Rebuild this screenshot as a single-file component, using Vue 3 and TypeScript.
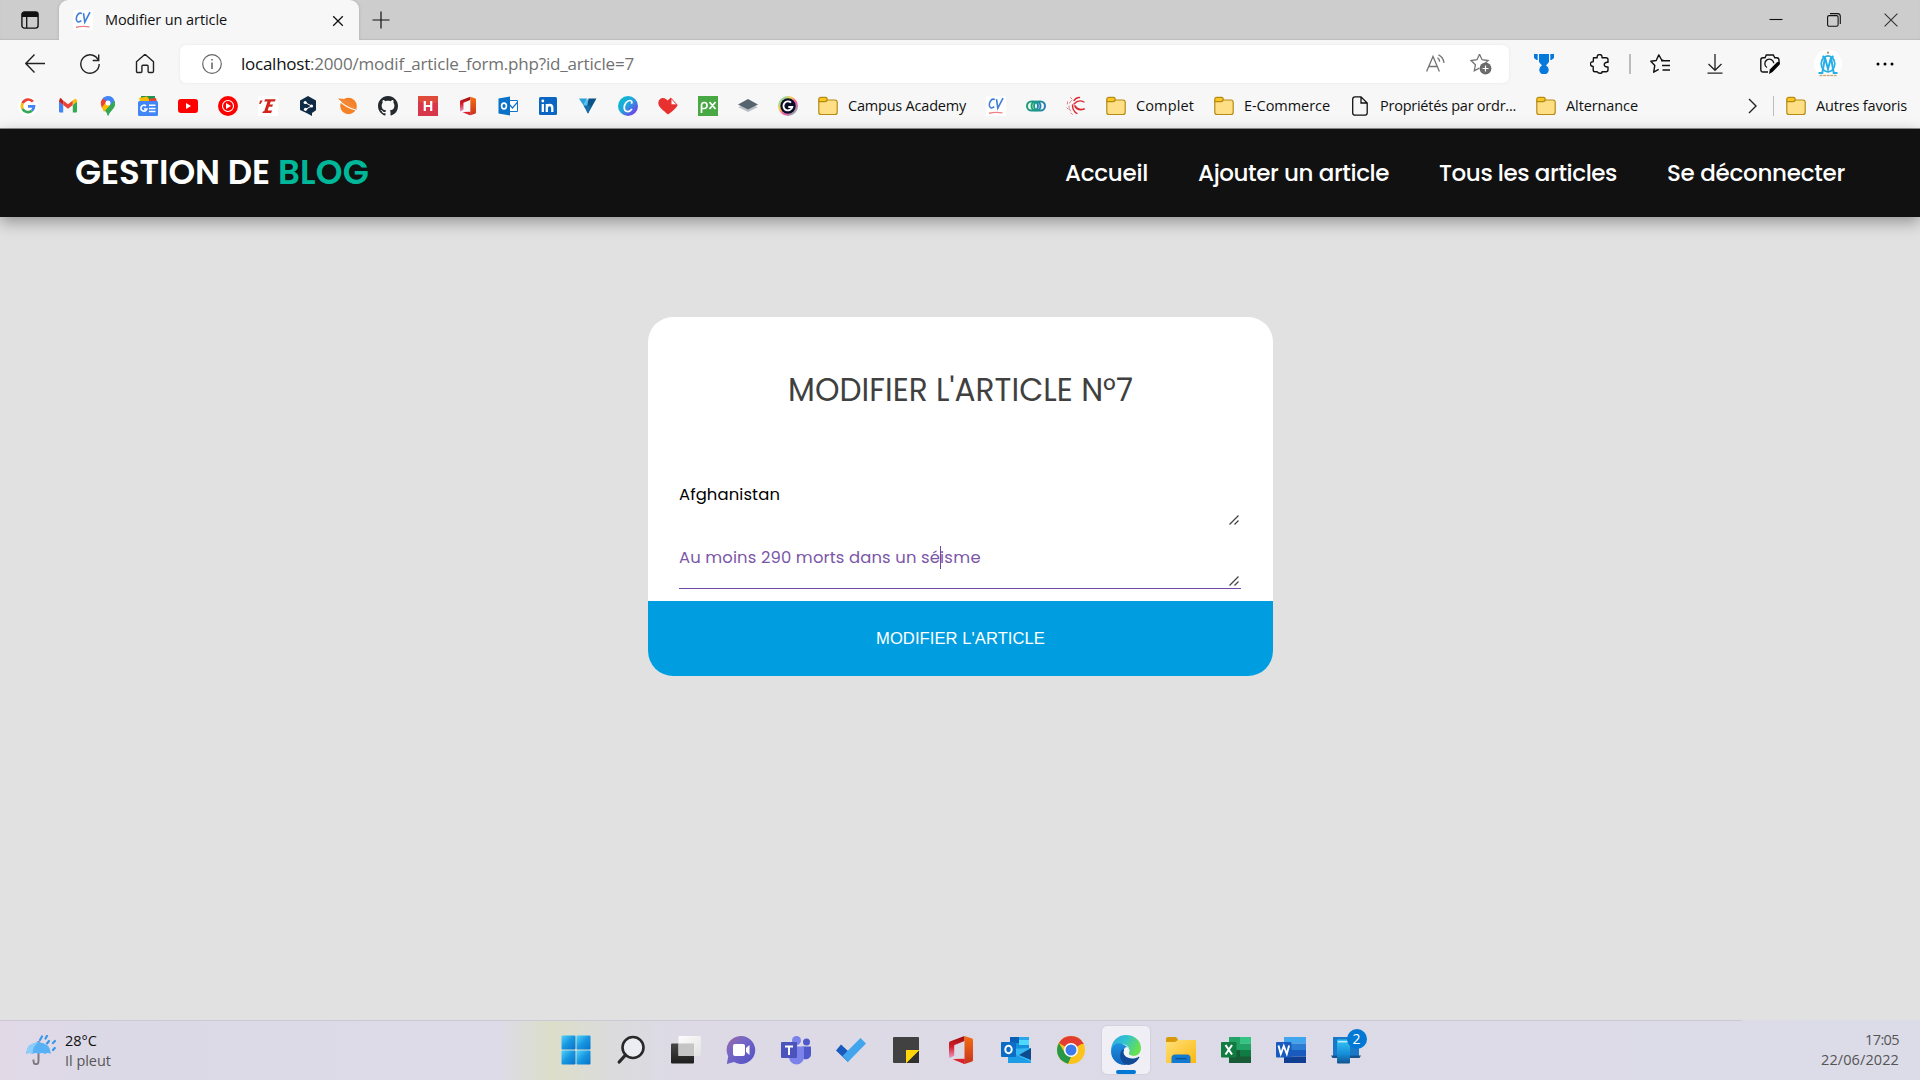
<script setup lang="ts">
import type { Directive } from 'vue'

// Tracks a label so that it fills the given width in pixels.
const vFit: Directive<HTMLElement, number> = {
  mounted(el, { value }) {
    const natural = el.getBoundingClientRect().width
    const count = (el.textContent ?? '').length
    if (count > 0) el.style.letterSpacing = `${(value - natural) / count}px`
  },
}

interface Link {
  label: string
  width: number
}

const nav: Link[] = [
  { label: 'Accueil', width: 83 },
  { label: 'Ajouter un article', width: 191 },
  { label: 'Tous les articles', width: 178 },
  { label: 'Se déconnecter', width: 178 },
]
</script>

<template>
  <div class="screen">
    <svg width="0" height="0" class="defs">
      <defs>
        <symbol id="folder" viewBox="0 0 20 20">
          <path d="M.8 4.5v11.7c0 1.6.8 2.3 2.3 2.3h13.8c1.500 0 2.300-.8 2.300-2.300V6.300C19.200 4.800 18.400 4 17 4H9" fill="#ffdf85" stroke="#b58b14" stroke-width="1.200" />
          <path d="M.8 5.600V3.400C.8 2 1.500 1.300 2.800 1.300h4.700c1 0 1.700.7 1.700 1.700S8.500 5.600 7 5.600z" fill="#f9c623" stroke="#b58b14" stroke-width="1.200" />
        </symbol>
        <symbol id="cv" viewBox="0 0 20 20">
          <rect width="20" height="20" fill="#fff" />
          <path d="M8.800 3.600C6 2 3.200 5.500 3.300 9c.1 3.500 2.700 3.600 5 1.700M10.500 3.200l1.300 9 5.200-10" fill="none" stroke="#3f7fd8" stroke-width="1.600" />
          <path d="M3 17.300c4-1 9-1.200 13.500-.4" fill="none" stroke="#ef7f84" stroke-width="1.400" />
        </symbol>
        <symbol id="office" viewBox="0 0 24 28">
          <path d="M15.500 0 1.500 5.200C.5 5.600 0 6.300 0 7.400v13.200c0 1 .6 1.600 1.500 1.200l3.700-2.100V9.200L15.500 5z" fill="url(#officeA)" />
          <path d="M15.500 0 22.500 2.200c1 .3 1.500 1 1.500 2v19.500c0 1-.5 1.700-1.500 2L15.500 28z" fill="url(#officeB)" />
          <path d="M3.600 23.300 15.500 28v-5z" fill="#d9232e" />
          <path d="M5.200 23 15.500 22.800V28z" fill="#d9232e" />
        </symbol>
        <linearGradient id="officeA" x1="0" y1="0" x2="0" y2="1"><stop offset="0" stop-color="#9c0b0e" /><stop offset=".5" stop-color="#d4202b" /><stop offset="1" stop-color="#e89ac9" /></linearGradient>
        <linearGradient id="officeB" x1="0" y1="0" x2="0" y2="1"><stop offset="0" stop-color="#f36f14" /><stop offset="1" stop-color="#c8321b" /></linearGradient>
        <linearGradient id="canva" x1="0" y1="0" x2="1" y2="1"><stop offset="0" stop-color="#00c4cc" /><stop offset=".45" stop-color="#20a5dc" /><stop offset="1" stop-color="#8a1ff0" /></linearGradient>
        <linearGradient id="rings" x1="0" y1="0" x2="1" y2="0"><stop offset="0" stop-color="#17a472" /><stop offset="1" stop-color="#247fb5" /></linearGradient>
        <linearGradient id="rainbow" x1="0" y1="0" x2="1" y2="1"><stop offset="0" stop-color="#31d6f2" /><stop offset=".35" stop-color="#f7d34c" /><stop offset=".6" stop-color="#f353ad" /><stop offset="1" stop-color="#5bdc9c" /></linearGradient>
        <linearGradient id="win" x1="0" y1="0" x2="1" y2="1"><stop offset="0" stop-color="#4fd2fb" /><stop offset=".5" stop-color="#1796e0" /><stop offset="1" stop-color="#0672ca" /></linearGradient>
        <linearGradient id="dark" x1="0" y1="0" x2="0" y2="1"><stop offset="0" stop-color="#474747" /><stop offset="1" stop-color="#1e1e1e" /></linearGradient>
        <linearGradient id="pane" x1="0" y1="0" x2="1" y2="1"><stop offset="0" stop-color="#fdfdfd" /><stop offset="1" stop-color="#e2e2e2" /></linearGradient>
        <linearGradient id="chat" x1="0" y1="0" x2="1" y2="1"><stop offset="0" stop-color="#a2669c" /><stop offset=".35" stop-color="#7768c5" /><stop offset="1" stop-color="#5051c7" /></linearGradient>
        <linearGradient id="edgeTop" x1="0" y1="0" x2="1" y2=".4"><stop offset="0" stop-color="#2ba6e6" /><stop offset=".5" stop-color="#31c3cf" /><stop offset="1" stop-color="#68e14f" /></linearGradient>
        <linearGradient id="edgeBlue" x1="0" y1="0" x2="0" y2="1"><stop offset="0" stop-color="#1d92e1" /><stop offset="1" stop-color="#0f64bd" /></linearGradient>
        <linearGradient id="yellow" x1="0" y1="0" x2="1" y2="1"><stop offset="0" stop-color="#ffe07a" /><stop offset="1" stop-color="#fcb80e" /></linearGradient>
        <linearGradient id="phone" x1="0" y1="0" x2="0" y2="1"><stop offset="0" stop-color="#36c6f4" /><stop offset=".6" stop-color="#168dd8" /><stop offset="1" stop-color="#12548f" /></linearGradient>
      </defs>
    </svg>

    <div class="tabbar">
      <svg class="tab-menu" width="18" height="18" viewBox="0 0 18 18"><rect x=".9" y=".9" width="16.200" height="16.200" rx="2.600" fill="none" stroke="#111" stroke-width="1.400" /><path d="M1 6V3.500Q1 1 3.500 1h11Q17 1 17 3.500V6z" fill="#111" /><path d="M5.700 6v11" stroke="#111" stroke-width="1.300" /></svg>
      <div class="tab">
        <svg class="favicon" width="20" height="20"><use href="#cv" /></svg>
        <span v-fit="122" class="tab-title">Modifier un article</span>
        <svg class="tab-close" width="12" height="12" viewBox="0 0 12 12"><path d="m1.200 1.200 9.600 9.600M10.800 1.200l-9.600 9.600" stroke="#111" stroke-width="1.300" /></svg>
      </div>
      <svg class="plus" width="18" height="18" viewBox="0 0 18 18"><path d="M9 .5v17M.5 9h17" stroke="#111" stroke-width="1.200" /></svg>
      <div class="controls">
        <svg width="14" height="14" viewBox="0 0 14 14"><path d="M.5 6.500h13" stroke="#111" stroke-width="1.100" /></svg>
        <svg width="14" height="14" viewBox="0 0 14 14"><rect x=".6" y="2.600" width="10.500" height="10.600" rx="1.500" fill="none" stroke="#111" stroke-width="1.100" /><path d="M3 .6h7.500q2.800 0 2.800 2.800V11" fill="none" stroke="#111" stroke-width="1.100" /></svg>
        <svg width="14" height="14" viewBox="0 0 14 14"><path d="m.6.6 12.800 12.800M13.400.6.6 13.400" stroke="#333" stroke-width="1.100" /></svg>
      </div>
    </div>

    <div class="toolbar">
      <div class="history">
        <svg width="20" height="20" viewBox="0 0 20 20"><path d="M20 9.500H1M9.500.5.8 9.500l8.700 9" fill="none" stroke="#222" stroke-width="1.400" /></svg>
        <svg width="20" height="20" viewBox="0 0 20 20"><path d="M18.500 6.500A9.200 9.200 0 1 0 19.200 10" fill="none" stroke="#222" stroke-width="1.400" /><path d="M18.700.5v6h-6" fill="none" stroke="#222" stroke-width="1.400" /></svg>
        <svg width="20" height="20" viewBox="0 0 20 20"><path d="M1.500 7.700 10 .3l8.500 7.400v9.600q0 1.200-1.200 1.200h-3.200q-1 0-1-1v-5.200q0-1-1-1H7.900q-1 0-1 1v5.200q0 1-1 1H2.700q-1.200 0-1.200-1.200z" fill="none" stroke="#222" stroke-width="1.400" stroke-linejoin="round" /></svg>
      </div>
      <div class="address">
        <svg class="info" width="20" height="20" viewBox="0 0 20 20"><circle cx="10" cy="10" r="9.300" fill="none" stroke="#666" stroke-width="1.200" /><path d="M10 8.500V15M10 5v1.600" stroke="#555" stroke-width="1.400" /></svg>
        <div class="url"><span v-fit="69" class="host">localhost</span><span v-fit="324">:2000/modif_article_form.php?id_article=7</span></div>
        <svg class="read" width="20" height="20" viewBox="0 0 20 20"><path d="M.6 17.500 7 2.500l6.400 15M2.700 12.500h8.600M11.500 3.800q2 1.200 2.200 4M12.500.8q4.800 2.200 5.500 8" fill="none" stroke="#737373" stroke-width="1.300" /></svg>
        <svg class="addfav" width="22" height="22" viewBox="0 0 22 22"><path d="m9.500 1.200 2.600 5.500 6 .8-4.400 4.300.8 3M9.500 1.200 7 6.700l-6 .8 4.400 4.300-1.100 6 5-2.700" fill="none" stroke="#737373" stroke-width="1.300" /><circle cx="15.500" cy="15.500" r="5.900" fill="#6b6b6b" /><path d="M15.500 12.500v6M12.500 15.500h6" stroke="#fff" stroke-width="1.200" /></svg>
      </div>
      <svg class="medal" width="20" height="20" viewBox="0 0 20 20"><path d="M0 0h3.700v6H2.500L0 4zM20 0h-3.700v6h1.200L20 4zM5 0h10v8l-3 3.500a4.700 4.700 0 1 1-4 0L5 8z" fill="#0578dc" /></svg>
      <svg class="puzzle" width="20" height="20" viewBox="0 0 20 20"><path d="M3.500 3.700h3.700c-.8-4.200 5.500-4.200 4.800 0h4q2 0 2 2v2.700c-5-.8-5 5.300 0 4.500v2.800q0 2-2 2h-4c.7 2-4 2-4.800 0H5q-1.800 0-1.800-1.800v-3.400C-.5 12.200-.5 7.500 3.200 7.700z" fill="none" stroke="#111" stroke-width="1.400" stroke-linejoin="round" /></svg>
      <i class="sep tall"></i>
      <svg class="favs" width="20" height="20" viewBox="0 0 20 20"><path d="M13.500 6.400 11.700 6 8.800.9 6.200 6.500.8 7.300l4 4.100-1.100 6.800 5-2.800M11 6.700h9M12 11.500h8M12.500 16h7.500" fill="none" stroke="#111" stroke-width="1.400" stroke-linejoin="round" /></svg>
      <svg class="download" width="16" height="20" viewBox="0 0 16 20"><path d="M8 0v16M1.500 10 8 16.300l6.500-6.300M.5 19.200h15" fill="none" stroke="#222" stroke-width="1.300" /></svg>
      <svg class="camera" width="20" height="20" viewBox="0 0 20 20"><path d="M8 18H3.200q-2.400 0-2.400-2.400V6q0-2.200 2.200-2.200h2L6.300 1h7l1.500 2.800h2Q19 3.800 19 6v3" fill="none" stroke="#111" stroke-width="1.400" /><path d="M7 13.500A4.500 4.500 0 1 1 13.800 9.200" fill="none" stroke="#111" stroke-width="1.300" /><path d="m9 20 .8-4.500L17 8.200q1.400-1 2.500.2 1 1.200 0 2.400L12.500 18z" fill="#000" /></svg>
      <svg class="avatar" width="28" height="28" viewBox="0 0 28 28"><circle cx="14" cy="14" r="14" fill="#fff" /><circle cx="14" cy="2.700" r="1.100" fill="#b58b52" /><ellipse cx="14" cy="13.800" rx="6.800" ry="8" fill="none" stroke="#27aee4" stroke-width="1.700" /><path d="M4.500 23h3.800L11 7.500l3 11.500 3-11.500L19.700 23h3.800M11 7.500 8.500 6M17 7.500 19.500 6" fill="none" stroke="#27aee4" stroke-width="2" /><path d="M5.500 25.500h17" stroke="#c9ac7d" stroke-width="1.500" stroke-dasharray="3 .6" /></svg>
      <svg class="dots" width="18" height="4" viewBox="0 0 18 4"><circle cx="2" cy="2" r="1.500" /><circle cx="9" cy="2" r="1.500" /><circle cx="16" cy="2" r="1.500" /></svg>
    </div>

    <div class="bookmarks">
      <svg viewBox="0 0 20 20"><circle cx="10" cy="10" r="10" fill="#fff" /><g fill="none" stroke-width="2.700"><path d="M14.900 5.700A6.100 6.100 0 0 0 4.600 7.200" stroke="#ea4335" /><path d="M4.600 7.200a6.100 6.100 0 0 0 0 5.600" stroke="#fbbc05" /><path d="M4.600 12.800a6.100 6.100 0 0 0 9.300 1.900" stroke="#34a853" /><path d="M13.900 14.700q2.100-1.700 2.100-4.400h-6" stroke="#4285f4" /></g></svg>
      <svg viewBox="0 0 20 20"><path d="M1 5v10.500q0 1 1 1h3.200V9z" fill="#4285f4" /><path d="M19 5v10.500q0 1-1 1h-3.200V9z" fill="#34a853" /><path d="m1 5.500 4.200 3.500V4.600L4 3.500Q2-.1 1 5.500" fill="#c5221f" /><path d="M5.200 4.600V9l4.800 3.700L14.800 9V4.600L10 8.300z" fill="#ea4335" /><path d="M14.800 4.600V9L19 5.700q0-4.200-3-2.200z" fill="#fbbc04" /></svg>
      <svg viewBox="0 0 20 20"><path d="M4.200 11.500 10 4l6.500 1q2 5-3 9.500Q11 17 10 20q-.8-3.500-3-5.300z" fill="#34a853" /><path d="M3 6Q5-.1 10 0q5 .1 6.500 5L10 11z" fill="#4285f4" /><path d="M5 2.500 9 6l-5 6Q2 7 3.200 5z" fill="#ea4335" /><path d="m3.800 11.500 4-5 4.500 2.500-6.300 7z" fill="#fbbc04" /><path d="M16.500 5q1.500 5-3 9.500Q11 17 10 20q-.8-3.500-2.500-5.500z" fill="#34a853" /><circle cx="10" cy="7" r="2.500" fill="#fff" /></svg>
      <svg viewBox="0 0 20 20"><path d="M3 0h14v5H3z" fill="#25934a" /><path d="m1 2 8-1.500 4 5H2z" fill="#fbbc05" /><path d="m11 3 7-1 1 4h-8z" fill="#ea4335" /><rect y="5" width="20" height="15" rx="1.500" fill="#4285f4" /><path d="M8 10a3 3 0 1 0 .8 3H6M11 9.300h6.500M11 12.500h6.500M11 15.500h6.500" fill="none" stroke="#fff" stroke-width="1.600" /></svg>
      <svg viewBox="0 0 20 20"><rect y="3" width="20" height="14" rx="3" fill="#f00" /><path d="m8 7 5 3-5 3z" fill="#fff" /></svg>
      <svg viewBox="0 0 20 20"><circle cx="10" cy="10" r="10" fill="#f00" /><circle cx="10" cy="10" r="5.500" fill="none" stroke="#fff" stroke-width="1.100" /><path d="m8 7 5 3-5 3z" fill="#fff" /></svg>
      <svg viewBox="0 0 20 20"><rect width="20" height="20" fill="#fff" /><path d="M7.200 3.200h10.600l-1 2.300h-4l-1.100 3.100h3.300l-.8 2.200h-3.300l-1.200 3.700h4.500l-1.200 2.500H4.200l1-1.700h1L9.500 5.500H6.200zM2 4.500h2.700L2.500 8H1.200z" fill="#d2231b" /></svg>
      <svg viewBox="0 0 20 20"><path d="m10 0 8 4.600v9.700L14 17v3l-4.500-2.500L2 14V4.600z" fill="#0f2b46" /><path d="m7 6.500 6.500 3.500L8 13.200" fill="none" stroke="#fff" stroke-width="1" /><circle cx="7.200" cy="6.500" r="1.600" fill="#fff" /><circle cx="13.500" cy="10" r="1.600" fill="#fff" /><circle cx="7.500" cy="13.300" r="1.600" fill="#fff" /></svg>
      <svg viewBox="0 0 20 20"><circle cx="10.500" cy="10" r="8.300" fill="#f58025" /><path d="M0 2.700q5-1 12 3.300 5 3 7 8Q8 11.500 0 2.700" fill="#f58634" /><path d="M.5 3.800q7 7.600 18 10.500" fill="none" stroke="#fff" stroke-width="1.100" /></svg>
      <svg viewBox="0 0 16 16"><path fill="#24292f" d="M8 0C3.580 0 0 3.580 0 8c0 3.540 2.290 6.530 5.470 7.590.4.070.55-.17.55-.38 0-.19-.01-.82-.01-1.490-2.010.37-2.530-.49-2.690-.94-.09-.23-.48-.94-.82-1.130-.28-.15-.68-.52-.01-.53.63-.01 1.080.58 1.230.82.72 1.210 1.870.87 2.330.66.070-.52.28-.87.51-1.070-1.780-.2-3.640-.89-3.640-3.950 0-.87.31-1.590.82-2.150-.08-.2-.36-1.020.08-2.120 0 0 .67-.21 2.200.82.64-.18 1.320-.27 2-.27s1.360.09 2 .27c1.530-1.040 2.200-.82 2.200-.82.44 1.100.16 1.920.08 2.120.51.56.82 1.270.82 2.150 0 3.070-1.870 3.750-3.650 3.950.29.25.54.73.54 1.480 0 1.070-.01 1.930-.01 2.200 0 .21.15.46.55.38A8.010 8.010 0 0 0 16 8c0-4.420-3.580-8-8-8" /></svg>
      <svg viewBox="0 0 20 20"><rect width="20" height="20" fill="#d8364a" /><path d="M0 0h20v6L10 9 0 5z" fill="#e04c3c" /><path d="M6.800 5v10M13.200 5v10M6.800 10h6.400" stroke="#fff" stroke-width="2.200" /></svg>
      <svg viewBox="0 0 20 20"><use href="#office" x="2" width="16" height="20" /></svg>
      <svg viewBox="0 0 20 20"><path d="M10 4.500h9.500v11H10z" fill="#fff" stroke="#1474c8" stroke-width="1" /><path d="m11 8 3.500 4L20 5.500" fill="none" stroke="#1474c8" stroke-width="1.200" /><path d="M.5 2.500 12 .5v19L.5 17.500z" fill="#0b72c9" /><ellipse cx="6" cy="10" rx="2.400" ry="2.900" fill="none" stroke="#fff" stroke-width="1.600" /></svg>
      <svg viewBox="0 0 20 20"><rect x="1" y="1" width="18" height="18" rx="1.500" fill="#0a66c2" /><path d="M4.800 8v8M8.800 8v8M8.800 12q0-3 2.800-3 2.700 0 2.700 3v4" fill="none" stroke="#fff" stroke-width="2.300" /><circle cx="4.800" cy="5" r="1.400" fill="#fff" /></svg>
      <svg viewBox="0 0 20 20"><path d="M1 2.500h8L5.500 9.500z" fill="#2c9fdc" /><path d="M9 2.500 13 9.500 10 17.500 5.500 9.500z" fill="#53bdeb" /><path d="M10.500 2.500H18.500L10 17.500 8.500 15z" fill="#095387" /><path d="M5.500 9.500h7.500l-3 8z" fill="#176fa9" /></svg>
      <svg viewBox="0 0 20 20"><circle cx="10" cy="10" r="10" fill="url(#canva)" /><path d="M13.500 7.700q1.200-3-1.500-3.200c-3.200-.2-5.800 4-5.800 7 0 4.500 4.700 5.500 7.800 1.500" fill="none" stroke="#fff" stroke-width="1.700" /></svg>
      <svg viewBox="0 0 20 20"><path d="M10 18.500C5 14 0 11 .3 6.500.8 1 7 .5 9.500 4.500L13 1.500V9h6.700Q18 13 10 18.500" fill="#e8302f" /><path d="m13 2.300 6 6.500h-6z" fill="#fff" stroke="#e8302f" stroke-width="1" /></svg>
      <svg viewBox="0 0 20 20"><rect width="20" height="20" fill="#47a844" /><path d="M3.500 17V9.500q0-3 2.800-3t2.700 3-2.700 3H4M11.500 6l6 7M17.500 6l-6 7" fill="none" stroke="#fff" stroke-width="1.700" /></svg>
      <svg viewBox="0 0 20 20"><path d="m0 11 10 5 10-5-10-3z" fill="#b9c1c7" /><path d="m0 8.500 10 5 10-5L10 3z" fill="#56646f" /></svg>
      <svg viewBox="0 0 20 20"><circle cx="10" cy="10" r="10" fill="url(#rainbow)" /><circle cx="10" cy="10" r="7.700" fill="#0a0c28" /><path d="M13 6.600a4.500 4.500 0 1 0 1.300 4.400h-4" fill="none" stroke="#fff" stroke-width="1.900" /></svg>
      <div class="mark"><svg><use href="#folder" /></svg><span v-fit="118">Campus Academy</span></div>
      <svg><use href="#cv" /></svg>
      <svg viewBox="0 0 20 20"><g fill="none" stroke="url(#rings)" stroke-width="2"><rect x="1" y="5.500" width="11" height="9" rx="4.500" /><circle cx="10" cy="10" r="4.500" /><rect x="8" y="5.500" width="11" height="9" rx="4.500" /></g></svg>
      <svg viewBox="0 0 20 20"><g fill="none" stroke="#dc2830" stroke-linecap="round"><path d="M8 4.500q2.500-3.500 5.500-3M8 8q4.500-5 10-2" stroke-width="1.400" /><path d="M6.500 9q0 6 4.500 8.500" stroke-width="1.400" /><path d="M9 10q2.500 5 9 3" stroke-width="1.800" /><path d="M5.500 4.500Q4 5.500 3.500 7M3 10q-.5 3 1.500 5M4.500 1.500 6 3M1.500 6v2M1 12l1 1M5 17l1.500 1.500" stroke-width=".6" /></g></svg>
      <div class="mark"><svg><use href="#folder" /></svg><span v-fit="58">Complet</span></div>
      <div class="mark"><svg><use href="#folder" /></svg><span v-fit="86">E-Commerce</span></div>
      <div class="mark"><svg viewBox="0 0 20 20"><path d="M5 .8h6L17.200 7v9.700q0 2.500-2.500 2.500H5.200q-2.500 0-2.500-2.500V3.200Q2.700.8 5 .8M11 1v6h6" fill="none" stroke="#111" stroke-width="1.300" /></svg><span v-fit="136">Propriétés par ordr...</span></div>
      <div class="mark"><svg><use href="#folder" /></svg><span v-fit="72">Alternance</span></div>
      <div class="others">
        <svg class="chev" viewBox="0 0 9 16"><path d="m1 1 7 7-7 7" fill="none" stroke="#222" stroke-width="1.400" /></svg>
        <i class="sep"></i>
        <div class="mark"><svg><use href="#folder" /></svg><span v-fit="91">Autres favoris</span></div>
      </div>
    </div>

    <header class="site-head">
      <div class="logo"><span v-fit="203">GESTION DE&nbsp;</span><span v-fit="91" class="accent">BLOG</span></div>
      <nav>
        <a v-for="item in nav" :key="item.label" v-fit="item.width">{{ item.label }}</a>
      </nav>
    </header>

    <main>
      <section class="card">
        <h1><span v-fit="345">MODIFIER L'ARTICLE N°7</span></h1>
        <div class="field first">
          <span v-fit="101">Afghanistan</span>
          <svg class="grip" viewBox="0 0 10 10"><path d="M.5 9.500 9.500.5M5.500 9.500l4-4" stroke="#444" stroke-width="1.300" /></svg>
        </div>
        <div class="field active">
          <span v-fit="261">Au moins 290 morts dans un sé</span><i class="caret"></i><span v-fit="41">isme</span>
          <svg class="grip" viewBox="0 0 10 10"><path d="M.5 9.500 9.500.5M5.500 9.500l4-4" stroke="#444" stroke-width="1.300" /></svg>
        </div>
        <button><span v-fit="169">MODIFIER L'ARTICLE</span></button>
      </section>
    </main>

    <footer class="taskbar">
      <div class="weather">
        <svg width="30" height="30" viewBox="0 0 30 30"><path d="M12.500 6v20q0 3.200-2.500 3.200T7.500 26v-1.500" fill="none" stroke="#7d7b80" stroke-width="2" /><path d="M0 19Q1 8 12.500 7 24 8 25 19q-3-2-6 0-3-2-6.500 0-3-2-6 0-3.500-2-6.500 0" fill="#58b1f5" /><path d="M0 19Q1 8 12.500 7q-6 4-6 12-3.500-2-6.500 0" fill="#8ccdfb" /><path d="m14 5 2-3.500M19.500 3.500 21 .8M21 8.500l2-2.500M27 8l2-2M27 15l1.800-2" stroke="#3a98ea" stroke-width="2.200" stroke-linecap="round" /></svg>
        <div><p class="temp"><span v-fit="32">28°C</span></p><p class="sky"><span v-fit="46">Il pleut</span></p></div>
      </div>
      <div class="apps">
        <div class="app"><svg viewBox="0 0 30 30"><g fill="url(#win)"><rect x=".5" y=".5" width="14" height="14" rx="1" /><rect x="15.500" y=".5" width="14" height="14" rx="1" /><rect x=".5" y="15.500" width="14" height="14" rx="1" /><rect x="15.500" y="15.500" width="14" height="14" rx="1" /></g></svg></div>
        <div class="app"><svg viewBox="0 0 30 30"><circle cx="17" cy="12.500" r="10.500" fill="#ececf3" stroke="#292929" stroke-width="2.600" /><path d="m9.500 20-6.300 7" stroke="#292929" stroke-width="3.300" stroke-linecap="round" /></svg></div>
        <div class="app"><svg viewBox="0 0 30 30"><rect y="8.500" width="23" height="20" rx="1" fill="url(#dark)" /><rect x="7.500" y="1" width="22.500" height="20" rx="1" fill="url(#pane)" /><path d="M7.500 8.500H23V21H7.500z" fill="#c5c5c5" /></svg></div>
        <div class="app"><svg viewBox="0 0 30 30"><path d="M15 1a14 14 0 1 1-7 26L.8 29l1.400-7.500A14 14 0 0 1 15 1" fill="url(#chat)" /><rect x="7" y="9" width="12" height="12" rx="2" fill="#fff" /><path d="m20 13 3.500-3v10L20 17z" fill="#fff" /></svg></div>
        <div class="app"><svg viewBox="0 0 30 30"><circle cx="15.500" cy="5.500" r="4.500" fill="#7b83eb" /><circle cx="25.500" cy="7" r="3.500" fill="#5059c9" /><path d="M21 11.500h9v8.500a5.500 5.500 0 0 1-9 3z" fill="#5059c9" /><path d="M8 11.500h15V22a7.500 7.500 0 0 1-15 0z" fill="#7b83eb" /><rect y="7" width="16" height="16" rx="1" fill="#4b53bc" /><path d="M4 11.500h8M8 11.500V20" stroke="#fff" stroke-width="1.900" /></svg></div>
        <div class="app"><svg viewBox="0 0 30 30"><path d="m0 15.500 5-6 7 6.500v11z" fill="#185abd" /><path d="M6.500 21 24.500 3l5.500 5.500L12 27z" fill="#41a5ee" /></svg></div>
        <div class="app"><svg viewBox="0 0 30 30"><rect x="2" y="2" width="26" height="26" rx="1" fill="#414141" /><path d="M15 15h13v1L16 28h-1z" fill="#ffd60a" /><path d="M28 15.500V28H15.500z" fill="#303030" /></svg></div>
        <div class="app"><svg viewBox="0 0 30 30"><use href="#office" x="3" y="1" width="24" height="28" /></svg></div>
        <div class="app"><svg viewBox="0 0 30 30"><path d="M9 2h19v12H9z" fill="#1490df" /><path d="M9 2h9v6H9z" fill="#0a5fb4" /><path d="M18 2h10v8H18z" fill="#50d9ff" /><path d="M18 2h10v3H18z" fill="#28a8ea" /><path d="M7 14 30 13v15H7z" fill="#35b8f1" /><path d="m18 20 12-7v12z" fill="#0c4b8c" /><path d="m7 16 23 11v1H7z" fill="#1d9de5" /><rect y="7" width="15" height="15" rx="1" fill="#0c6dc6" /><ellipse cx="7.500" cy="14.500" rx="3.200" ry="3.800" fill="none" stroke="#fff" stroke-width="2" /></svg></div>
        <div class="app"><svg viewBox="0 0 30 30"><circle cx="15" cy="15" r="14" fill="#fcc31e" /><path d="M15 15 2.900 8A14 14 0 0 1 27.200 8z" fill="#e23d30" /><path d="M2.900 8 9.500 19l5.500 3-3 6.700A14 14 0 0 1 2.900 8" fill="#279847" /><path d="M15 8.500h12.400" stroke="#e23d30" stroke-width="1" /><circle cx="15" cy="15" r="7" fill="#fff" /><circle cx="15" cy="15" r="5.500" fill="#3b7bed" /></svg></div>
        <div class="app current"><svg viewBox="0 0 30 30"><path d="M0 16C0 6 7 0 15 0c9 0 15 6 15 13 0 5-3.500 8-8 8-3 0-5-1-4-3 2-5-2-9-8-9-5 0-9 3-10 7" fill="url(#edgeTop)" /><path d="M0 16C1 9 7 7 11 9c5 2 7 4 7 7-9-3-10 8-2 13.800C7 30.800 0 25 0 16" fill="url(#edgeBlue)" /><path d="M11 15c-4 6-1 14 6 14.900 5 0 9-3 11.300-7.400.4-.8-.5-.9-1-.6C20 26 10 22 13 14z" fill="#114a96" /><path d="M13 14q3-4 5 .5.500 2-.5 4 1 2.500 5 2.300Q15 24 13 18z" fill="#f5f5f8" /></svg></div>
        <div class="app"><svg viewBox="0 0 30 30"><path d="M0 4Q0 2 2 2h8l3 4v3H0z" fill="#d99a09" /><path d="M0 7h9l3-2h18v23H0z" fill="url(#yellow)" /><path d="M5.500 28v-5q0-3.500 3.500-3.500h12q3.500 0 3.500 3.500v5z" fill="#127bd0" /><path d="M9.500 23.700h11" stroke="#0b4e91" stroke-width="1.200" /></svg></div>
        <div class="app"><svg viewBox="0 0 30 30"><path d="M8 2h11v13H8z" fill="#21a366" /><path d="M19 2h11v6.500H19z" fill="#33c481" /><path d="M19 8.500h11V15H19z" fill="#21a366" /><path d="M8 15h22v13H8z" fill="#185c37" /><path d="M19 15h11v6.500H19z" fill="#107c41" /><rect y="7" width="15.500" height="15.500" rx="1" fill="#107c41" /><path d="m4.500 10 6.500 9.500M11 10l-6.500 9.500" stroke="#fff" stroke-width="2.100" /></svg></div>
        <div class="app"><svg viewBox="0 0 30 30"><path d="M8 2h22v6.500H8z" fill="#41a5ee" /><path d="M8 8.500h22V15H8z" fill="#2b7cd3" /><path d="M8 15h22v6.500H8z" fill="#185abd" /><path d="M8 21.500h22V28H8z" fill="#103f91" /><rect y="7" width="15.500" height="15.500" rx="1" fill="#185abd" /><path d="m2.500 10.500 2.300 8.500 3-8 3 8 2.300-8.500" fill="none" stroke="#fff" stroke-width="1.900" /></svg></div>
        <div class="app"><svg viewBox="0 0 30 30"><path d="M2 2h26v19H2z" fill="#1a78c9" /><path d="M0 20.500h30L28.500 23h-27z" fill="#17528b" /><rect x="6" y="4.500" width="13" height="24" rx="1" fill="url(#phone)" /><path d="M7 6.800h10" stroke="#fff" stroke-width="1" /></svg><b class="badge">2</b></div>
      </div>
      <div class="clock"><p><span v-fit="34">17:05</span></p><p><span v-fit="78">22/06/2022</span></p></div>
    </footer>
  </div>
</template>

<style>
body {
  margin: 0;
  overflow: hidden;
}
</style>

<style scoped>
* {
  box-sizing: border-box;
}
p,
h1 {
  margin: 0;
}
svg {
  display: block;
  flex: none;
}
span,
nav a {
  display: inline-block;
  flex: none;
  white-space: nowrap;
}
.screen {
  width: 1920px;
  height: 1080px;
  display: flex;
  flex-direction: column;
  background: #e1e1e1;
  font-family: 'Segoe UI', 'Open Sans', sans-serif;
  color: #111;
  overflow: hidden;
}
.defs {
  position: absolute;
}
.tabbar {
  flex: none;
  height: 40px;
  display: flex;
  align-items: center;
  background: #cdcdcd;
  box-shadow: inset 0 -1px 1px #bdbdbd;
}
.tab-menu {
  margin: 0 20px 0 21px;
}
.tab {
  width: 300px;
  height: 40px;
  display: flex;
  align-items: center;
  padding-left: 14px;
  border-radius: 9px 9px 0 0;
  background: #f7f7f7;
  box-shadow: 0 0 3px #aaa;
  clip-path: inset(0 -4px 0 -4px);
}
.tab-title {
  margin-left: 12px;
  font-size: 14.5px;
  line-height: 20px;
}
.tab-close {
  margin: 1px 0 0 105px;
}
.plus {
  margin-left: 13px;
}
.controls {
  display: flex;
  gap: 43.500px;
  margin: 0 22px 0 auto;
}
.toolbar {
  flex: none;
  height: 48px;
  display: flex;
  align-items: center;
  background: #f7f7f7;
}
.history {
  display: flex;
  gap: 35px;
  width: 155px;
  margin: 0 0 0 25px;
}
.address {
  width: 1329px;
  height: 38px;
  display: flex;
  align-items: center;
  border-radius: 6px;
  background: #fff;
  box-shadow: 0 0 3px #e4e4e4;
}
.info {
  margin-left: 22px;
}
.url {
  display: flex;
  margin: -1px 0 0 19px;
  font-size: 17px;
  line-height: 24px;
  color: #717171;
}
.host {
  color: #111;
}
.read {
  margin-left: auto;
}
.addfav {
  margin: 0 17px 0 24px;
}
.medal {
  margin-left: 25px;
}
.puzzle {
  margin-left: 36px;
}
.sep {
  width: 1px;
  height: 20px;
  background: #bcbcbc;
}
.tall {
  width: 2px;
  margin-left: 19px;
}
.favs {
  margin-left: 19px;
}
.download {
  margin-left: 37px;
}
.camera {
  margin-left: 37px;
}
.avatar {
  margin-left: 34px;
}
.dots {
  margin-left: 34px;
}
.bookmarks {
  flex: none;
  height: 41px;
  display: flex;
  align-items: center;
  gap: 20px;
  padding: 0 13px 5px 18px;
  border-bottom: 1px solid #8f8f8f;
  background: #f7f7f7;
}
.bookmarks svg {
  width: 20px;
  height: 20px;
}
.mark {
  display: flex;
  align-items: center;
  gap: 10px;
  font-size: 14.5px;
  line-height: 20px;
}
.others {
  display: flex;
  align-items: center;
  margin-left: auto;
}
.others .chev {
  width: 9px;
  height: 16px;
}
.others .sep {
  margin: 0 12px 0 16px;
}
.site-head {
  position: relative;
  flex: none;
  height: 88px;
  display: flex;
  align-items: center;
  justify-content: space-between;
  padding: 0 75px;
  background: #111;
  box-shadow: 0 5px 15px rgba(0, 0, 0, 0.35);
  font-family: Poppins, Inter, sans-serif;
  color: #fff;
}
.logo {
  display: flex;
  margin-top: -2px;
  font-size: 34px;
  font-weight: 600;
  line-height: 40px;
}
.accent {
  color: #00b899;
}
nav {
  display: flex;
  gap: 50px;
  font-size: 23px;
  font-weight: 500;
  line-height: 32px;
}
main {
  flex: 1;
  padding-top: 100px;
}
.card {
  width: 625px;
  height: 359px;
  margin: 0 auto;
  position: relative;
  left: 0.5px;
  display: flex;
  flex-direction: column;
  border-radius: 25px;
  background: #fff;
  overflow: hidden;
  font-family: Poppins, Inter, sans-serif;
}
h1 {
  height: 146px;
  padding-top: 53px;
  text-align: center;
  font-size: 31.200px;
  font-weight: 400;
  line-height: 40px;
  color: #404040;
}
.field {
  position: relative;
  width: 562px;
  margin-left: 31px;
  font-size: 16.400px;
  line-height: 24px;
  color: #000;
  display: flex;
}
.first {
  height: 64px;
  padding-top: 20px;
}
.active {
  height: 62px;
  padding-top: 19px;
  border-bottom: 1px solid #7347a4;
  color: #7b56a8;
}
.grip {
  position: absolute;
  right: 2px;
  bottom: 2px;
  width: 10px;
  height: 10px;
}
.caret {
  width: 1px;
  height: 23px;
  margin: 0 -1px 0 0;
  background: #7347a4;
}
button {
  height: 75px;
  margin-top: auto;
  border: 0;
  padding: 0;
  background: #009ee0;
  color: #fff;
  font: 16.600px/24px 'Liberation Sans', Arial, sans-serif;
}
.taskbar {
  position: relative;
  flex: none;
  height: 60px;
  display: flex;
  align-items: flex-start;
  background: linear-gradient(90deg, #e2d9e7 0, #dcd9e7 90px, #dcdbe7 500px, #dcdec9 552px, #dbdbdc 610px, #dddae6 680px, #dcdbe8 1920px);
}
.taskbar::before {
  content: '';
  position: absolute;
  left: 0;
  top: 0;
  width: 1742px;
  height: 1px;
  background: #cbc9d6;
}
.weather {
  flex: none;
  width: 548px;
  display: flex;
  gap: 9px;
  padding: 15px 0 0 26px;
  font-size: 14.5px;
  line-height: 20px;
}
.weather > div {
  margin-top: -4px;
}
.sky {
  color: #555;
}
.apps {
  display: flex;
  padding-top: 6px;
}
.app {
  position: relative;
  width: 48px;
  height: 48px;
  margin: 0 3.500px;
  display: grid;
  place-items: center;
}
.app svg {
  width: 30px;
  height: 30px;
}
.current {
  border-radius: 5px;
  background: #f0eff6;
  box-shadow: 0 0 1px 1px #d3d1de;
}
.current::after {
  content: '';
  position: absolute;
  left: 14px;
  bottom: 0;
  width: 20px;
  height: 4px;
  border-radius: 2px;
  background: #0078d4;
}
.badge {
  position: absolute;
  left: 25px;
  top: 3px;
  width: 20px;
  height: 20px;
  border-radius: 50%;
  background: #0078d4;
  color: #fff;
  text-align: center;
  font-size: 14px;
  font-weight: 400;
  line-height: 20px;
}
.clock {
  margin: 10px 21px 0 auto;
  text-align: right;
  font-size: 14.5px;
  line-height: 20px;
  color: #555;
}
</style>
